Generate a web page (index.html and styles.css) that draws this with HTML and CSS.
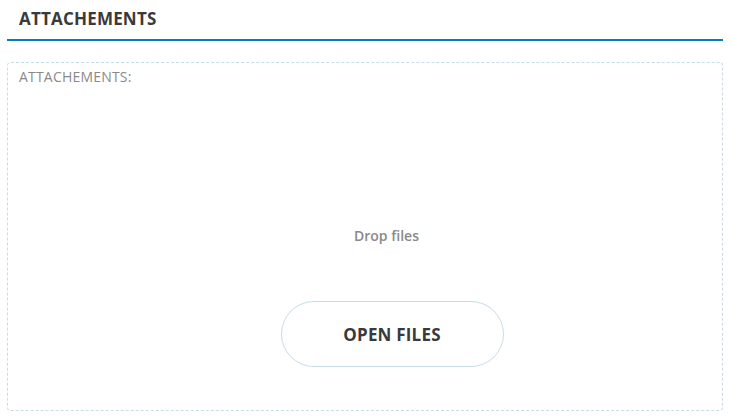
FILE: index.html
```html
<!DOCTYPE html>
<html>
<head>
<meta charset="utf-8">
<link rel="stylesheet" href="styles.css">
</head>
<body>
<div class="page">
  <div class="section-head">
    <h2 class="section-title">ATTACHEMENTS</h2>
  </div>
  <div class="dropzone">
    <div class="dz-label">ATTACHEMENTS:</div>
    <div class="dz-body">
      <div class="dz-hint">Drop files</div>
      <button class="open-btn">OPEN FILES</button>
    </div>
  </div>
</div>
</body>
</html>
```
FILE: styles.css
```css
html, body {
  margin: 0;
  padding: 0;
  background: #ffffff;
}
body {
  font-family: "Open Sans", "Liberation Sans", sans-serif;
}
.page {
  padding: 0 9px 0 7px;
  display: flex;
  flex-direction: column;
}
.section-head {
  border-bottom: 2px solid #0a7bbd;
  padding: 7px 12px 0 12px;
  height: 32px;
}
.section-title {
  margin: 0;
  font-size: 17px;
  font-weight: 700;
  line-height: 24px;
  letter-spacing: 0.2px;
  color: #3a3a3a;
}
.dropzone {
  margin-top: 21px;
  height: 349px;
  box-sizing: border-box;
  border: 1px dashed #c5dde8;
  border-radius: 4px;
  padding: 4px 11px 0 11px;
  display: flex;
  flex-direction: column;
}
.dz-label {
  font-size: 14px;
  line-height: 20px;
  letter-spacing: 0.2px;
  color: #8a8a8a;
}
.dz-body {
  display: flex;
  flex-direction: column;
  align-items: center;
  padding-top: 139px;
  padding-left: 54px;
}
.dz-hint {
  font-size: 14px;
  font-weight: 600;
  color: #8a8a8a;
  line-height: 20px;
  margin-right: 11px;
}
.open-btn {
  margin-top: 55px;
  width: 223px;
  height: 66px;
  border: 1px solid #c8dce8;
  border-radius: 33px;
  background: #ffffff;
  font-family: "Open Sans", "Liberation Sans", sans-serif;
  font-size: 17px;
  font-weight: 700;
  letter-spacing: 0.2px;
  color: #3a3a3a;
  padding: 0;
}
```
